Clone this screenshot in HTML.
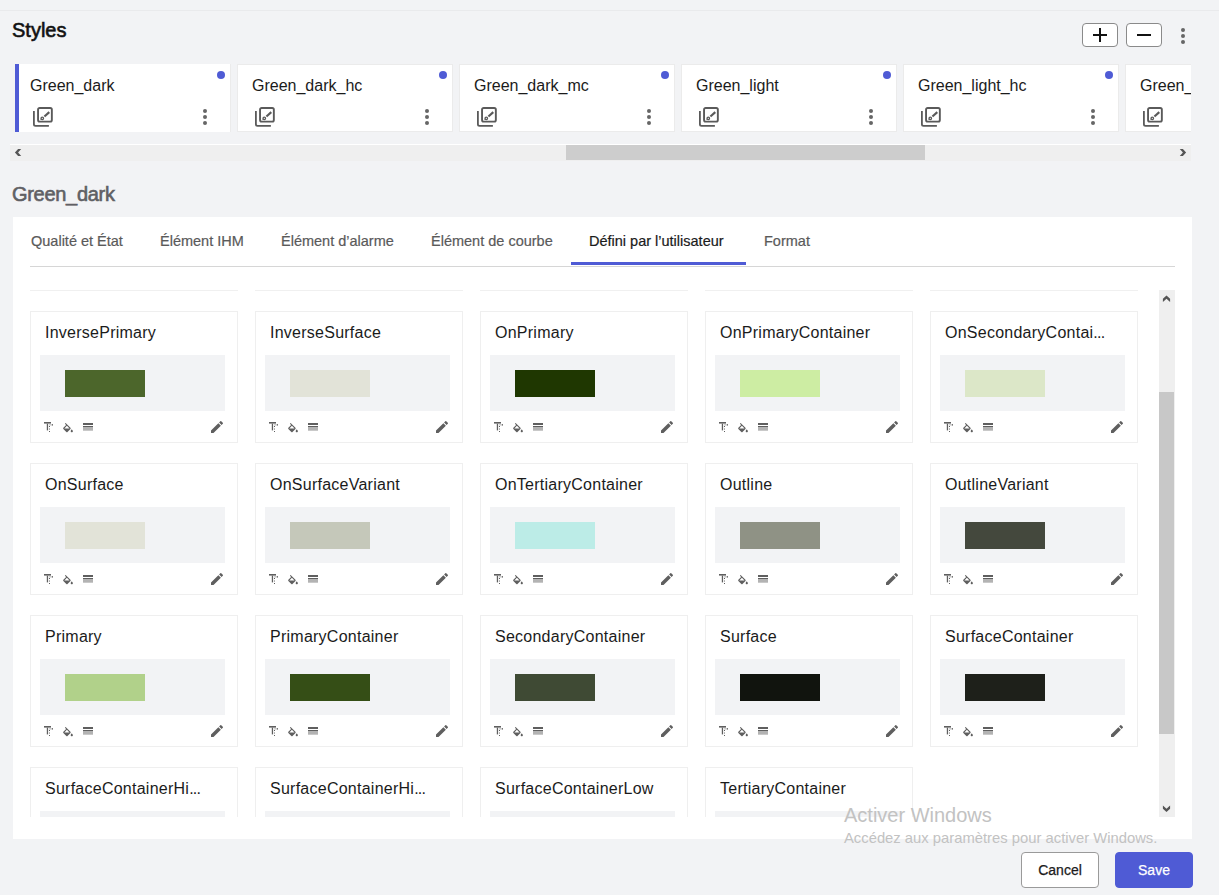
<!DOCTYPE html><html><head><meta charset="utf-8"><style>*{margin:0;padding:0;box-sizing:border-box}
html,body{width:1219px;height:895px;overflow:hidden;background:#f2f3f5;font-family:"Liberation Sans",sans-serif;position:relative}
.topline{position:absolute;left:0;top:10px;width:1219px;height:1px;background:#e9eaec}
.title{position:absolute;left:12px;top:18px;font-size:20px;color:#111;line-height:24px;-webkit-text-stroke:0.6px #111}
.btn{position:absolute;top:23px;width:36px;height:24px;border:1px solid #8a8a8a;border-radius:4px;background:#fff}
.btn svg{position:absolute;left:-1px;top:-1px}
.keb{position:absolute;width:4px;height:16px}
.keb i{display:block;width:4px;height:4px;border-radius:50%;background:#666;margin-bottom:2px}
.topkeb{left:1181px;top:28px}
.carousel{position:absolute;left:15px;top:64px;width:1176px;height:68px;overflow:hidden}
.tc{position:absolute;top:0;width:216px;height:68px;background:#fff;border:1px solid #ebebeb}
.tc.sel{border-left:4px solid #4f5bd5;border-top:0;border-bottom:0}
.tcn{position:absolute;left:14px;top:12px;font-size:16px;color:#1b1b1b;line-height:18px;white-space:nowrap}
.dot{position:absolute;left:201px;top:6px;width:8px;height:8px;border-radius:50%;background:#4f5bd5}
.tc .lib{position:absolute;left:17px;top:42px}
.tc .keb{left:187px;top:44px}
.tc.sel .tcn{left:11px;top:13px}.tc.sel .lib{left:14px;top:43px}.tc.sel .keb{left:184px;top:45px}.tc.sel .dot{left:198px;top:7px}
.hscroll{position:absolute;left:10px;top:144px;width:1181px;height:17px;background:#efefef;border-top:1px solid #fff}
.hthumb{position:absolute;left:556px;top:0;width:359px;height:15px;background:#cdcdcd}
.harr{position:absolute;top:3px}.harr.l{left:3px}.harr.r{left:1168px}
.sub{position:absolute;left:12px;top:182px;font-size:20px;color:#5f6064;line-height:24px;letter-spacing:-0.3px;-webkit-text-stroke:0.6px #5f6064}
.panel{position:absolute;left:13px;top:217px;width:1179px;height:622px;background:#fff}
.tab{position:absolute;top:15px;font-size:14.5px;color:#5a5a5a;line-height:18px;white-space:nowrap;-webkit-text-stroke:0.2px currentColor}
.tab.act{color:#1b1b1b}
.tabline{position:absolute;left:17px;top:49px;width:1145px;height:1px;background:#d6d6d6}
.tabul{position:absolute;left:558px;top:45px;width:175px;height:3px;background:#4f5bd5}
.gridwrap{position:absolute;left:0;top:52px;width:1179px;height:548px;overflow:hidden}
.gtopline{position:absolute;top:21px;height:1px;background:#f0f0f0}
.gc{position:absolute;width:208px;height:132px;border:1px solid #efefef;background:#fff}
.gcn{position:absolute;left:14px;top:11px;font-size:16px;letter-spacing:0.25px;color:#1b1b1b;line-height:20px;white-space:nowrap}
.gbox{position:absolute;left:9px;top:43px;width:185px;height:56px;background:#f2f3f5}
.sw{position:absolute;left:25px;top:15px;width:80px;height:27px}
.ic{position:absolute;left:10px;top:107px}
.pen{position:absolute;left:178px;top:107px}
.vscroll{position:absolute;left:1146px;top:73px;width:16px;height:527px;background:#efefef}
.vthumb{position:absolute;left:0;top:102px;width:15px;height:342px;background:#c8c8c8}
.varr{position:absolute;left:3px}.varr.u{top:4px}.varr.d{top:513px}
.wm1{position:absolute;left:844px;top:803px;font-size:20px;color:#c2c2c2;line-height:24px;white-space:nowrap}
.wm2{position:absolute;left:844px;top:829px;font-size:14.8px;color:#c2c2c2;line-height:18px;white-space:nowrap}
.fbtn{position:absolute;top:852px;height:36px;border-radius:4px;font-size:14px;line-height:34px;text-align:center;-webkit-text-stroke:0.25px currentColor}
.cancel{left:1021px;width:78px;border:1px solid #9a9a9a;background:#fff;color:#1b1b1b}
.save{left:1115px;width:78px;background:#4f5bd5;color:#fff;border:1px solid #4f5bd5}
</style></head><body>
<div class="topline"></div>
<div class="title">Styles</div>
<div class="btn plus" style="left:1082px"><svg width="36" height="24" viewBox="0 0 36 24"><path d="M11 12h14M18 5v14" stroke="#111" stroke-width="2"/></svg></div>
<div class="btn minus" style="left:1126px"><svg width="36" height="24" viewBox="0 0 36 24"><path d="M11 12h14" stroke="#111" stroke-width="2"/></svg></div>
<div class="keb topkeb"><i></i><i></i><i></i></div>
<div class="carousel">
<div class="tc sel" style="left:0px"><div class="tcn">Green_dark</div><div class="dot"></div><svg class="lib" width="20" height="20" viewBox="0 0 20 20"><path d="M0.9 4V17.3a1.6 1.6 0 0 0 1.6 1.6H15.9" fill="none" stroke="#5a5a5a" stroke-width="1.8"/><rect x="5.05" y="1" width="13.8" height="13.65" rx="1.6" fill="none" stroke="#5a5a5a" stroke-width="1.9"/><path d="M11.4 9.5L16.3 5.1" stroke="#5a5a5a" stroke-width="2.1"/><circle cx="9.3" cy="11.3" r="1.25" fill="none" stroke="#5a5a5a" stroke-width="1.3"/><path d="M8.2 12.2L6.9 12.9 7.9 11.6z" fill="#5a5a5a"/></svg><div class="keb"><i></i><i></i><i></i></div></div>
<div class="tc" style="left:222px"><div class="tcn">Green_dark_hc</div><div class="dot"></div><svg class="lib" width="20" height="20" viewBox="0 0 20 20"><path d="M0.9 4V17.3a1.6 1.6 0 0 0 1.6 1.6H15.9" fill="none" stroke="#5a5a5a" stroke-width="1.8"/><rect x="5.05" y="1" width="13.8" height="13.65" rx="1.6" fill="none" stroke="#5a5a5a" stroke-width="1.9"/><path d="M11.4 9.5L16.3 5.1" stroke="#5a5a5a" stroke-width="2.1"/><circle cx="9.3" cy="11.3" r="1.25" fill="none" stroke="#5a5a5a" stroke-width="1.3"/><path d="M8.2 12.2L6.9 12.9 7.9 11.6z" fill="#5a5a5a"/></svg><div class="keb"><i></i><i></i><i></i></div></div>
<div class="tc" style="left:444px"><div class="tcn">Green_dark_mc</div><div class="dot"></div><svg class="lib" width="20" height="20" viewBox="0 0 20 20"><path d="M0.9 4V17.3a1.6 1.6 0 0 0 1.6 1.6H15.9" fill="none" stroke="#5a5a5a" stroke-width="1.8"/><rect x="5.05" y="1" width="13.8" height="13.65" rx="1.6" fill="none" stroke="#5a5a5a" stroke-width="1.9"/><path d="M11.4 9.5L16.3 5.1" stroke="#5a5a5a" stroke-width="2.1"/><circle cx="9.3" cy="11.3" r="1.25" fill="none" stroke="#5a5a5a" stroke-width="1.3"/><path d="M8.2 12.2L6.9 12.9 7.9 11.6z" fill="#5a5a5a"/></svg><div class="keb"><i></i><i></i><i></i></div></div>
<div class="tc" style="left:666px"><div class="tcn">Green_light</div><div class="dot"></div><svg class="lib" width="20" height="20" viewBox="0 0 20 20"><path d="M0.9 4V17.3a1.6 1.6 0 0 0 1.6 1.6H15.9" fill="none" stroke="#5a5a5a" stroke-width="1.8"/><rect x="5.05" y="1" width="13.8" height="13.65" rx="1.6" fill="none" stroke="#5a5a5a" stroke-width="1.9"/><path d="M11.4 9.5L16.3 5.1" stroke="#5a5a5a" stroke-width="2.1"/><circle cx="9.3" cy="11.3" r="1.25" fill="none" stroke="#5a5a5a" stroke-width="1.3"/><path d="M8.2 12.2L6.9 12.9 7.9 11.6z" fill="#5a5a5a"/></svg><div class="keb"><i></i><i></i><i></i></div></div>
<div class="tc" style="left:888px"><div class="tcn">Green_light_hc</div><div class="dot"></div><svg class="lib" width="20" height="20" viewBox="0 0 20 20"><path d="M0.9 4V17.3a1.6 1.6 0 0 0 1.6 1.6H15.9" fill="none" stroke="#5a5a5a" stroke-width="1.8"/><rect x="5.05" y="1" width="13.8" height="13.65" rx="1.6" fill="none" stroke="#5a5a5a" stroke-width="1.9"/><path d="M11.4 9.5L16.3 5.1" stroke="#5a5a5a" stroke-width="2.1"/><circle cx="9.3" cy="11.3" r="1.25" fill="none" stroke="#5a5a5a" stroke-width="1.3"/><path d="M8.2 12.2L6.9 12.9 7.9 11.6z" fill="#5a5a5a"/></svg><div class="keb"><i></i><i></i><i></i></div></div>
<div class="tc" style="left:1110px"><div class="tcn">Green_light_mc</div><div class="dot"></div><svg class="lib" width="20" height="20" viewBox="0 0 20 20"><path d="M0.9 4V17.3a1.6 1.6 0 0 0 1.6 1.6H15.9" fill="none" stroke="#5a5a5a" stroke-width="1.8"/><rect x="5.05" y="1" width="13.8" height="13.65" rx="1.6" fill="none" stroke="#5a5a5a" stroke-width="1.9"/><path d="M11.4 9.5L16.3 5.1" stroke="#5a5a5a" stroke-width="2.1"/><circle cx="9.3" cy="11.3" r="1.25" fill="none" stroke="#5a5a5a" stroke-width="1.3"/><path d="M8.2 12.2L6.9 12.9 7.9 11.6z" fill="#5a5a5a"/></svg><div class="keb"><i></i><i></i><i></i></div></div>
</div>
<div class="hscroll"><div class="hthumb"></div><svg class="harr l" width="10" height="10" viewBox="0 0 10 10"><path d="M5.1 0.9H8.2L5.1 4.5 8.2 8.1H5.1L1.9 4.5z" fill="#555"/></svg><svg class="harr r" width="10" height="10" viewBox="0 0 10 10"><path d="M1.8 0.9H4.9L8.1 4.5 4.9 8.1H1.8L4.9 4.5z" fill="#555"/></svg></div>
<div class="sub">Green_dark</div>
<div class="panel">
<div class="tab" style="left:18px">Qualité et État</div>
<div class="tab" style="left:147px">Élément IHM</div>
<div class="tab" style="left:268px">Élément d’alarme</div>
<div class="tab" style="left:418px">Élément de courbe</div>
<div class="tab act" style="left:576px">Défini par l’utilisateur</div>
<div class="tab" style="left:751px">Format</div>
<div class="tabline"></div><div class="tabul"></div>
<div class="gridwrap">
<div class="gtopline" style="left:17px;width:208px"></div><div class="gtopline" style="left:242px;width:208px"></div><div class="gtopline" style="left:467px;width:208px"></div><div class="gtopline" style="left:692px;width:208px"></div><div class="gtopline" style="left:917px;width:208px"></div>
<div class="gc" style="left:17px;top:42px"><div class="gcn">InversePrimary</div><div class="gbox"><div class="sw" style="background:#4c662b"></div></div><svg class="ic" width="60" height="16" viewBox="0 0 60 16"><rect x="3" y="3" width="7" height="1.6" fill="#5f5f5f"/><rect x="5.8" y="4.6" width="1.3" height="6.8" fill="#5f5f5f"/><rect x="8.1" y="5" width="3.6" height="1.6" fill="#ccc"/><rect x="11" y="5" width="1" height="1.6" fill="#777"/><rect x="8" y="7" width="1" height="1" fill="#5f5f5f"/><rect x="8" y="9.2" width="1" height="1.7" fill="#aaa"/><rect x="8" y="12" width="1" height="1" fill="#5f5f5f"/><svg x="20.5" y="4" width="13" height="13" viewBox="0 0 24 24"><path d="M16.56 8.94L7.62 0 6.21 1.41l2.38 2.38-5.15 5.15c-.59.59-.59 1.54 0 2.12l5.5 5.5c.29.29.68.44 1.06.44s.77-.15 1.06-.44l5.5-5.5c.59-.58.59-1.53 0-2.12zM5.21 10L10 5.21 14.79 10H5.21zM19 11.5s-2 2.17-2 3.5c0 1.1.9 2 2 2s2-.9 2-2c0-1.33-2-3.5-2-3.5z" fill="#5f5f5f"/></svg><rect x="42" y="4" width="10" height="2" fill="#5f5f5f"/><rect x="42" y="7" width="10" height="1" fill="#5f5f5f"/><rect x="42" y="8" width="10" height="3.7" fill="#b3b3b3"/></svg><svg class="pen" width="16" height="16" viewBox="0 0 24 24"><path d="M3 17.25V21h3.75L17.81 9.94l-3.75-3.75L3 17.25zM20.71 7.04a1 1 0 000-1.41l-2.34-2.34a1 1 0 00-1.41 0l-1.83 1.83 3.75 3.75 1.83-1.83z" fill="#5f5f5f"/></svg></div>
<div class="gc" style="left:242px;top:42px"><div class="gcn">InverseSurface</div><div class="gbox"><div class="sw" style="background:#e2e3d8"></div></div><svg class="ic" width="60" height="16" viewBox="0 0 60 16"><rect x="3" y="3" width="7" height="1.6" fill="#5f5f5f"/><rect x="5.8" y="4.6" width="1.3" height="6.8" fill="#5f5f5f"/><rect x="8.1" y="5" width="3.6" height="1.6" fill="#ccc"/><rect x="11" y="5" width="1" height="1.6" fill="#777"/><rect x="8" y="7" width="1" height="1" fill="#5f5f5f"/><rect x="8" y="9.2" width="1" height="1.7" fill="#aaa"/><rect x="8" y="12" width="1" height="1" fill="#5f5f5f"/><svg x="20.5" y="4" width="13" height="13" viewBox="0 0 24 24"><path d="M16.56 8.94L7.62 0 6.21 1.41l2.38 2.38-5.15 5.15c-.59.59-.59 1.54 0 2.12l5.5 5.5c.29.29.68.44 1.06.44s.77-.15 1.06-.44l5.5-5.5c.59-.58.59-1.53 0-2.12zM5.21 10L10 5.21 14.79 10H5.21zM19 11.5s-2 2.17-2 3.5c0 1.1.9 2 2 2s2-.9 2-2c0-1.33-2-3.5-2-3.5z" fill="#5f5f5f"/></svg><rect x="42" y="4" width="10" height="2" fill="#5f5f5f"/><rect x="42" y="7" width="10" height="1" fill="#5f5f5f"/><rect x="42" y="8" width="10" height="3.7" fill="#b3b3b3"/></svg><svg class="pen" width="16" height="16" viewBox="0 0 24 24"><path d="M3 17.25V21h3.75L17.81 9.94l-3.75-3.75L3 17.25zM20.71 7.04a1 1 0 000-1.41l-2.34-2.34a1 1 0 00-1.41 0l-1.83 1.83 3.75 3.75 1.83-1.83z" fill="#5f5f5f"/></svg></div>
<div class="gc" style="left:467px;top:42px"><div class="gcn">OnPrimary</div><div class="gbox"><div class="sw" style="background:#1f3701"></div></div><svg class="ic" width="60" height="16" viewBox="0 0 60 16"><rect x="3" y="3" width="7" height="1.6" fill="#5f5f5f"/><rect x="5.8" y="4.6" width="1.3" height="6.8" fill="#5f5f5f"/><rect x="8.1" y="5" width="3.6" height="1.6" fill="#ccc"/><rect x="11" y="5" width="1" height="1.6" fill="#777"/><rect x="8" y="7" width="1" height="1" fill="#5f5f5f"/><rect x="8" y="9.2" width="1" height="1.7" fill="#aaa"/><rect x="8" y="12" width="1" height="1" fill="#5f5f5f"/><svg x="20.5" y="4" width="13" height="13" viewBox="0 0 24 24"><path d="M16.56 8.94L7.62 0 6.21 1.41l2.38 2.38-5.15 5.15c-.59.59-.59 1.54 0 2.12l5.5 5.5c.29.29.68.44 1.06.44s.77-.15 1.06-.44l5.5-5.5c.59-.58.59-1.53 0-2.12zM5.21 10L10 5.21 14.79 10H5.21zM19 11.5s-2 2.17-2 3.5c0 1.1.9 2 2 2s2-.9 2-2c0-1.33-2-3.5-2-3.5z" fill="#5f5f5f"/></svg><rect x="42" y="4" width="10" height="2" fill="#5f5f5f"/><rect x="42" y="7" width="10" height="1" fill="#5f5f5f"/><rect x="42" y="8" width="10" height="3.7" fill="#b3b3b3"/></svg><svg class="pen" width="16" height="16" viewBox="0 0 24 24"><path d="M3 17.25V21h3.75L17.81 9.94l-3.75-3.75L3 17.25zM20.71 7.04a1 1 0 000-1.41l-2.34-2.34a1 1 0 00-1.41 0l-1.83 1.83 3.75 3.75 1.83-1.83z" fill="#5f5f5f"/></svg></div>
<div class="gc" style="left:692px;top:42px"><div class="gcn">OnPrimaryContainer</div><div class="gbox"><div class="sw" style="background:#cdeda3"></div></div><svg class="ic" width="60" height="16" viewBox="0 0 60 16"><rect x="3" y="3" width="7" height="1.6" fill="#5f5f5f"/><rect x="5.8" y="4.6" width="1.3" height="6.8" fill="#5f5f5f"/><rect x="8.1" y="5" width="3.6" height="1.6" fill="#ccc"/><rect x="11" y="5" width="1" height="1.6" fill="#777"/><rect x="8" y="7" width="1" height="1" fill="#5f5f5f"/><rect x="8" y="9.2" width="1" height="1.7" fill="#aaa"/><rect x="8" y="12" width="1" height="1" fill="#5f5f5f"/><svg x="20.5" y="4" width="13" height="13" viewBox="0 0 24 24"><path d="M16.56 8.94L7.62 0 6.21 1.41l2.38 2.38-5.15 5.15c-.59.59-.59 1.54 0 2.12l5.5 5.5c.29.29.68.44 1.06.44s.77-.15 1.06-.44l5.5-5.5c.59-.58.59-1.53 0-2.12zM5.21 10L10 5.21 14.79 10H5.21zM19 11.5s-2 2.17-2 3.5c0 1.1.9 2 2 2s2-.9 2-2c0-1.33-2-3.5-2-3.5z" fill="#5f5f5f"/></svg><rect x="42" y="4" width="10" height="2" fill="#5f5f5f"/><rect x="42" y="7" width="10" height="1" fill="#5f5f5f"/><rect x="42" y="8" width="10" height="3.7" fill="#b3b3b3"/></svg><svg class="pen" width="16" height="16" viewBox="0 0 24 24"><path d="M3 17.25V21h3.75L17.81 9.94l-3.75-3.75L3 17.25zM20.71 7.04a1 1 0 000-1.41l-2.34-2.34a1 1 0 00-1.41 0l-1.83 1.83 3.75 3.75 1.83-1.83z" fill="#5f5f5f"/></svg></div>
<div class="gc" style="left:917px;top:42px"><div class="gcn">OnSecondaryContai<span style="letter-spacing:-0.7px">...</span></div><div class="gbox"><div class="sw" style="background:#dce7c8"></div></div><svg class="ic" width="60" height="16" viewBox="0 0 60 16"><rect x="3" y="3" width="7" height="1.6" fill="#5f5f5f"/><rect x="5.8" y="4.6" width="1.3" height="6.8" fill="#5f5f5f"/><rect x="8.1" y="5" width="3.6" height="1.6" fill="#ccc"/><rect x="11" y="5" width="1" height="1.6" fill="#777"/><rect x="8" y="7" width="1" height="1" fill="#5f5f5f"/><rect x="8" y="9.2" width="1" height="1.7" fill="#aaa"/><rect x="8" y="12" width="1" height="1" fill="#5f5f5f"/><svg x="20.5" y="4" width="13" height="13" viewBox="0 0 24 24"><path d="M16.56 8.94L7.62 0 6.21 1.41l2.38 2.38-5.15 5.15c-.59.59-.59 1.54 0 2.12l5.5 5.5c.29.29.68.44 1.06.44s.77-.15 1.06-.44l5.5-5.5c.59-.58.59-1.53 0-2.12zM5.21 10L10 5.21 14.79 10H5.21zM19 11.5s-2 2.17-2 3.5c0 1.1.9 2 2 2s2-.9 2-2c0-1.33-2-3.5-2-3.5z" fill="#5f5f5f"/></svg><rect x="42" y="4" width="10" height="2" fill="#5f5f5f"/><rect x="42" y="7" width="10" height="1" fill="#5f5f5f"/><rect x="42" y="8" width="10" height="3.7" fill="#b3b3b3"/></svg><svg class="pen" width="16" height="16" viewBox="0 0 24 24"><path d="M3 17.25V21h3.75L17.81 9.94l-3.75-3.75L3 17.25zM20.71 7.04a1 1 0 000-1.41l-2.34-2.34a1 1 0 00-1.41 0l-1.83 1.83 3.75 3.75 1.83-1.83z" fill="#5f5f5f"/></svg></div>
<div class="gc" style="left:17px;top:194px"><div class="gcn">OnSurface</div><div class="gbox"><div class="sw" style="background:#e2e3d8"></div></div><svg class="ic" width="60" height="16" viewBox="0 0 60 16"><rect x="3" y="3" width="7" height="1.6" fill="#5f5f5f"/><rect x="5.8" y="4.6" width="1.3" height="6.8" fill="#5f5f5f"/><rect x="8.1" y="5" width="3.6" height="1.6" fill="#ccc"/><rect x="11" y="5" width="1" height="1.6" fill="#777"/><rect x="8" y="7" width="1" height="1" fill="#5f5f5f"/><rect x="8" y="9.2" width="1" height="1.7" fill="#aaa"/><rect x="8" y="12" width="1" height="1" fill="#5f5f5f"/><svg x="20.5" y="4" width="13" height="13" viewBox="0 0 24 24"><path d="M16.56 8.94L7.62 0 6.21 1.41l2.38 2.38-5.15 5.15c-.59.59-.59 1.54 0 2.12l5.5 5.5c.29.29.68.44 1.06.44s.77-.15 1.06-.44l5.5-5.5c.59-.58.59-1.53 0-2.12zM5.21 10L10 5.21 14.79 10H5.21zM19 11.5s-2 2.17-2 3.5c0 1.1.9 2 2 2s2-.9 2-2c0-1.33-2-3.5-2-3.5z" fill="#5f5f5f"/></svg><rect x="42" y="4" width="10" height="2" fill="#5f5f5f"/><rect x="42" y="7" width="10" height="1" fill="#5f5f5f"/><rect x="42" y="8" width="10" height="3.7" fill="#b3b3b3"/></svg><svg class="pen" width="16" height="16" viewBox="0 0 24 24"><path d="M3 17.25V21h3.75L17.81 9.94l-3.75-3.75L3 17.25zM20.71 7.04a1 1 0 000-1.41l-2.34-2.34a1 1 0 00-1.41 0l-1.83 1.83 3.75 3.75 1.83-1.83z" fill="#5f5f5f"/></svg></div>
<div class="gc" style="left:242px;top:194px"><div class="gcn">OnSurfaceVariant</div><div class="gbox"><div class="sw" style="background:#c5c8ba"></div></div><svg class="ic" width="60" height="16" viewBox="0 0 60 16"><rect x="3" y="3" width="7" height="1.6" fill="#5f5f5f"/><rect x="5.8" y="4.6" width="1.3" height="6.8" fill="#5f5f5f"/><rect x="8.1" y="5" width="3.6" height="1.6" fill="#ccc"/><rect x="11" y="5" width="1" height="1.6" fill="#777"/><rect x="8" y="7" width="1" height="1" fill="#5f5f5f"/><rect x="8" y="9.2" width="1" height="1.7" fill="#aaa"/><rect x="8" y="12" width="1" height="1" fill="#5f5f5f"/><svg x="20.5" y="4" width="13" height="13" viewBox="0 0 24 24"><path d="M16.56 8.94L7.62 0 6.21 1.41l2.38 2.38-5.15 5.15c-.59.59-.59 1.54 0 2.12l5.5 5.5c.29.29.68.44 1.06.44s.77-.15 1.06-.44l5.5-5.5c.59-.58.59-1.53 0-2.12zM5.21 10L10 5.21 14.79 10H5.21zM19 11.5s-2 2.17-2 3.5c0 1.1.9 2 2 2s2-.9 2-2c0-1.33-2-3.5-2-3.5z" fill="#5f5f5f"/></svg><rect x="42" y="4" width="10" height="2" fill="#5f5f5f"/><rect x="42" y="7" width="10" height="1" fill="#5f5f5f"/><rect x="42" y="8" width="10" height="3.7" fill="#b3b3b3"/></svg><svg class="pen" width="16" height="16" viewBox="0 0 24 24"><path d="M3 17.25V21h3.75L17.81 9.94l-3.75-3.75L3 17.25zM20.71 7.04a1 1 0 000-1.41l-2.34-2.34a1 1 0 00-1.41 0l-1.83 1.83 3.75 3.75 1.83-1.83z" fill="#5f5f5f"/></svg></div>
<div class="gc" style="left:467px;top:194px"><div class="gcn">OnTertiaryContainer</div><div class="gbox"><div class="sw" style="background:#bcece7"></div></div><svg class="ic" width="60" height="16" viewBox="0 0 60 16"><rect x="3" y="3" width="7" height="1.6" fill="#5f5f5f"/><rect x="5.8" y="4.6" width="1.3" height="6.8" fill="#5f5f5f"/><rect x="8.1" y="5" width="3.6" height="1.6" fill="#ccc"/><rect x="11" y="5" width="1" height="1.6" fill="#777"/><rect x="8" y="7" width="1" height="1" fill="#5f5f5f"/><rect x="8" y="9.2" width="1" height="1.7" fill="#aaa"/><rect x="8" y="12" width="1" height="1" fill="#5f5f5f"/><svg x="20.5" y="4" width="13" height="13" viewBox="0 0 24 24"><path d="M16.56 8.94L7.62 0 6.21 1.41l2.38 2.38-5.15 5.15c-.59.59-.59 1.54 0 2.12l5.5 5.5c.29.29.68.44 1.06.44s.77-.15 1.06-.44l5.5-5.5c.59-.58.59-1.53 0-2.12zM5.21 10L10 5.21 14.79 10H5.21zM19 11.5s-2 2.17-2 3.5c0 1.1.9 2 2 2s2-.9 2-2c0-1.33-2-3.5-2-3.5z" fill="#5f5f5f"/></svg><rect x="42" y="4" width="10" height="2" fill="#5f5f5f"/><rect x="42" y="7" width="10" height="1" fill="#5f5f5f"/><rect x="42" y="8" width="10" height="3.7" fill="#b3b3b3"/></svg><svg class="pen" width="16" height="16" viewBox="0 0 24 24"><path d="M3 17.25V21h3.75L17.81 9.94l-3.75-3.75L3 17.25zM20.71 7.04a1 1 0 000-1.41l-2.34-2.34a1 1 0 00-1.41 0l-1.83 1.83 3.75 3.75 1.83-1.83z" fill="#5f5f5f"/></svg></div>
<div class="gc" style="left:692px;top:194px"><div class="gcn">Outline</div><div class="gbox"><div class="sw" style="background:#8f9285"></div></div><svg class="ic" width="60" height="16" viewBox="0 0 60 16"><rect x="3" y="3" width="7" height="1.6" fill="#5f5f5f"/><rect x="5.8" y="4.6" width="1.3" height="6.8" fill="#5f5f5f"/><rect x="8.1" y="5" width="3.6" height="1.6" fill="#ccc"/><rect x="11" y="5" width="1" height="1.6" fill="#777"/><rect x="8" y="7" width="1" height="1" fill="#5f5f5f"/><rect x="8" y="9.2" width="1" height="1.7" fill="#aaa"/><rect x="8" y="12" width="1" height="1" fill="#5f5f5f"/><svg x="20.5" y="4" width="13" height="13" viewBox="0 0 24 24"><path d="M16.56 8.94L7.62 0 6.21 1.41l2.38 2.38-5.15 5.15c-.59.59-.59 1.54 0 2.12l5.5 5.5c.29.29.68.44 1.06.44s.77-.15 1.06-.44l5.5-5.5c.59-.58.59-1.53 0-2.12zM5.21 10L10 5.21 14.79 10H5.21zM19 11.5s-2 2.17-2 3.5c0 1.1.9 2 2 2s2-.9 2-2c0-1.33-2-3.5-2-3.5z" fill="#5f5f5f"/></svg><rect x="42" y="4" width="10" height="2" fill="#5f5f5f"/><rect x="42" y="7" width="10" height="1" fill="#5f5f5f"/><rect x="42" y="8" width="10" height="3.7" fill="#b3b3b3"/></svg><svg class="pen" width="16" height="16" viewBox="0 0 24 24"><path d="M3 17.25V21h3.75L17.81 9.94l-3.75-3.75L3 17.25zM20.71 7.04a1 1 0 000-1.41l-2.34-2.34a1 1 0 00-1.41 0l-1.83 1.83 3.75 3.75 1.83-1.83z" fill="#5f5f5f"/></svg></div>
<div class="gc" style="left:917px;top:194px"><div class="gcn">OutlineVariant</div><div class="gbox"><div class="sw" style="background:#44483d"></div></div><svg class="ic" width="60" height="16" viewBox="0 0 60 16"><rect x="3" y="3" width="7" height="1.6" fill="#5f5f5f"/><rect x="5.8" y="4.6" width="1.3" height="6.8" fill="#5f5f5f"/><rect x="8.1" y="5" width="3.6" height="1.6" fill="#ccc"/><rect x="11" y="5" width="1" height="1.6" fill="#777"/><rect x="8" y="7" width="1" height="1" fill="#5f5f5f"/><rect x="8" y="9.2" width="1" height="1.7" fill="#aaa"/><rect x="8" y="12" width="1" height="1" fill="#5f5f5f"/><svg x="20.5" y="4" width="13" height="13" viewBox="0 0 24 24"><path d="M16.56 8.94L7.62 0 6.21 1.41l2.38 2.38-5.15 5.15c-.59.59-.59 1.54 0 2.12l5.5 5.5c.29.29.68.44 1.06.44s.77-.15 1.06-.44l5.5-5.5c.59-.58.59-1.53 0-2.12zM5.21 10L10 5.21 14.79 10H5.21zM19 11.5s-2 2.17-2 3.5c0 1.1.9 2 2 2s2-.9 2-2c0-1.33-2-3.5-2-3.5z" fill="#5f5f5f"/></svg><rect x="42" y="4" width="10" height="2" fill="#5f5f5f"/><rect x="42" y="7" width="10" height="1" fill="#5f5f5f"/><rect x="42" y="8" width="10" height="3.7" fill="#b3b3b3"/></svg><svg class="pen" width="16" height="16" viewBox="0 0 24 24"><path d="M3 17.25V21h3.75L17.81 9.94l-3.75-3.75L3 17.25zM20.71 7.04a1 1 0 000-1.41l-2.34-2.34a1 1 0 00-1.41 0l-1.83 1.83 3.75 3.75 1.83-1.83z" fill="#5f5f5f"/></svg></div>
<div class="gc" style="left:17px;top:346px"><div class="gcn">Primary</div><div class="gbox"><div class="sw" style="background:#b1d18a"></div></div><svg class="ic" width="60" height="16" viewBox="0 0 60 16"><rect x="3" y="3" width="7" height="1.6" fill="#5f5f5f"/><rect x="5.8" y="4.6" width="1.3" height="6.8" fill="#5f5f5f"/><rect x="8.1" y="5" width="3.6" height="1.6" fill="#ccc"/><rect x="11" y="5" width="1" height="1.6" fill="#777"/><rect x="8" y="7" width="1" height="1" fill="#5f5f5f"/><rect x="8" y="9.2" width="1" height="1.7" fill="#aaa"/><rect x="8" y="12" width="1" height="1" fill="#5f5f5f"/><svg x="20.5" y="4" width="13" height="13" viewBox="0 0 24 24"><path d="M16.56 8.94L7.62 0 6.21 1.41l2.38 2.38-5.15 5.15c-.59.59-.59 1.54 0 2.12l5.5 5.5c.29.29.68.44 1.06.44s.77-.15 1.06-.44l5.5-5.5c.59-.58.59-1.53 0-2.12zM5.21 10L10 5.21 14.79 10H5.21zM19 11.5s-2 2.17-2 3.5c0 1.1.9 2 2 2s2-.9 2-2c0-1.33-2-3.5-2-3.5z" fill="#5f5f5f"/></svg><rect x="42" y="4" width="10" height="2" fill="#5f5f5f"/><rect x="42" y="7" width="10" height="1" fill="#5f5f5f"/><rect x="42" y="8" width="10" height="3.7" fill="#b3b3b3"/></svg><svg class="pen" width="16" height="16" viewBox="0 0 24 24"><path d="M3 17.25V21h3.75L17.81 9.94l-3.75-3.75L3 17.25zM20.71 7.04a1 1 0 000-1.41l-2.34-2.34a1 1 0 00-1.41 0l-1.83 1.83 3.75 3.75 1.83-1.83z" fill="#5f5f5f"/></svg></div>
<div class="gc" style="left:242px;top:346px"><div class="gcn">PrimaryContainer</div><div class="gbox"><div class="sw" style="background:#354e16"></div></div><svg class="ic" width="60" height="16" viewBox="0 0 60 16"><rect x="3" y="3" width="7" height="1.6" fill="#5f5f5f"/><rect x="5.8" y="4.6" width="1.3" height="6.8" fill="#5f5f5f"/><rect x="8.1" y="5" width="3.6" height="1.6" fill="#ccc"/><rect x="11" y="5" width="1" height="1.6" fill="#777"/><rect x="8" y="7" width="1" height="1" fill="#5f5f5f"/><rect x="8" y="9.2" width="1" height="1.7" fill="#aaa"/><rect x="8" y="12" width="1" height="1" fill="#5f5f5f"/><svg x="20.5" y="4" width="13" height="13" viewBox="0 0 24 24"><path d="M16.56 8.94L7.62 0 6.21 1.41l2.38 2.38-5.15 5.15c-.59.59-.59 1.54 0 2.12l5.5 5.5c.29.29.68.44 1.06.44s.77-.15 1.06-.44l5.5-5.5c.59-.58.59-1.53 0-2.12zM5.21 10L10 5.21 14.79 10H5.21zM19 11.5s-2 2.17-2 3.5c0 1.1.9 2 2 2s2-.9 2-2c0-1.33-2-3.5-2-3.5z" fill="#5f5f5f"/></svg><rect x="42" y="4" width="10" height="2" fill="#5f5f5f"/><rect x="42" y="7" width="10" height="1" fill="#5f5f5f"/><rect x="42" y="8" width="10" height="3.7" fill="#b3b3b3"/></svg><svg class="pen" width="16" height="16" viewBox="0 0 24 24"><path d="M3 17.25V21h3.75L17.81 9.94l-3.75-3.75L3 17.25zM20.71 7.04a1 1 0 000-1.41l-2.34-2.34a1 1 0 00-1.41 0l-1.83 1.83 3.75 3.75 1.83-1.83z" fill="#5f5f5f"/></svg></div>
<div class="gc" style="left:467px;top:346px"><div class="gcn">SecondaryContainer</div><div class="gbox"><div class="sw" style="background:#3f4a34"></div></div><svg class="ic" width="60" height="16" viewBox="0 0 60 16"><rect x="3" y="3" width="7" height="1.6" fill="#5f5f5f"/><rect x="5.8" y="4.6" width="1.3" height="6.8" fill="#5f5f5f"/><rect x="8.1" y="5" width="3.6" height="1.6" fill="#ccc"/><rect x="11" y="5" width="1" height="1.6" fill="#777"/><rect x="8" y="7" width="1" height="1" fill="#5f5f5f"/><rect x="8" y="9.2" width="1" height="1.7" fill="#aaa"/><rect x="8" y="12" width="1" height="1" fill="#5f5f5f"/><svg x="20.5" y="4" width="13" height="13" viewBox="0 0 24 24"><path d="M16.56 8.94L7.62 0 6.21 1.41l2.38 2.38-5.15 5.15c-.59.59-.59 1.54 0 2.12l5.5 5.5c.29.29.68.44 1.06.44s.77-.15 1.06-.44l5.5-5.5c.59-.58.59-1.53 0-2.12zM5.21 10L10 5.21 14.79 10H5.21zM19 11.5s-2 2.17-2 3.5c0 1.1.9 2 2 2s2-.9 2-2c0-1.33-2-3.5-2-3.5z" fill="#5f5f5f"/></svg><rect x="42" y="4" width="10" height="2" fill="#5f5f5f"/><rect x="42" y="7" width="10" height="1" fill="#5f5f5f"/><rect x="42" y="8" width="10" height="3.7" fill="#b3b3b3"/></svg><svg class="pen" width="16" height="16" viewBox="0 0 24 24"><path d="M3 17.25V21h3.75L17.81 9.94l-3.75-3.75L3 17.25zM20.71 7.04a1 1 0 000-1.41l-2.34-2.34a1 1 0 00-1.41 0l-1.83 1.83 3.75 3.75 1.83-1.83z" fill="#5f5f5f"/></svg></div>
<div class="gc" style="left:692px;top:346px"><div class="gcn">Surface</div><div class="gbox"><div class="sw" style="background:#11140e"></div></div><svg class="ic" width="60" height="16" viewBox="0 0 60 16"><rect x="3" y="3" width="7" height="1.6" fill="#5f5f5f"/><rect x="5.8" y="4.6" width="1.3" height="6.8" fill="#5f5f5f"/><rect x="8.1" y="5" width="3.6" height="1.6" fill="#ccc"/><rect x="11" y="5" width="1" height="1.6" fill="#777"/><rect x="8" y="7" width="1" height="1" fill="#5f5f5f"/><rect x="8" y="9.2" width="1" height="1.7" fill="#aaa"/><rect x="8" y="12" width="1" height="1" fill="#5f5f5f"/><svg x="20.5" y="4" width="13" height="13" viewBox="0 0 24 24"><path d="M16.56 8.94L7.62 0 6.21 1.41l2.38 2.38-5.15 5.15c-.59.59-.59 1.54 0 2.12l5.5 5.5c.29.29.68.44 1.06.44s.77-.15 1.06-.44l5.5-5.5c.59-.58.59-1.53 0-2.12zM5.21 10L10 5.21 14.79 10H5.21zM19 11.5s-2 2.17-2 3.5c0 1.1.9 2 2 2s2-.9 2-2c0-1.33-2-3.5-2-3.5z" fill="#5f5f5f"/></svg><rect x="42" y="4" width="10" height="2" fill="#5f5f5f"/><rect x="42" y="7" width="10" height="1" fill="#5f5f5f"/><rect x="42" y="8" width="10" height="3.7" fill="#b3b3b3"/></svg><svg class="pen" width="16" height="16" viewBox="0 0 24 24"><path d="M3 17.25V21h3.75L17.81 9.94l-3.75-3.75L3 17.25zM20.71 7.04a1 1 0 000-1.41l-2.34-2.34a1 1 0 00-1.41 0l-1.83 1.83 3.75 3.75 1.83-1.83z" fill="#5f5f5f"/></svg></div>
<div class="gc" style="left:917px;top:346px"><div class="gcn">SurfaceContainer</div><div class="gbox"><div class="sw" style="background:#1e201a"></div></div><svg class="ic" width="60" height="16" viewBox="0 0 60 16"><rect x="3" y="3" width="7" height="1.6" fill="#5f5f5f"/><rect x="5.8" y="4.6" width="1.3" height="6.8" fill="#5f5f5f"/><rect x="8.1" y="5" width="3.6" height="1.6" fill="#ccc"/><rect x="11" y="5" width="1" height="1.6" fill="#777"/><rect x="8" y="7" width="1" height="1" fill="#5f5f5f"/><rect x="8" y="9.2" width="1" height="1.7" fill="#aaa"/><rect x="8" y="12" width="1" height="1" fill="#5f5f5f"/><svg x="20.5" y="4" width="13" height="13" viewBox="0 0 24 24"><path d="M16.56 8.94L7.62 0 6.21 1.41l2.38 2.38-5.15 5.15c-.59.59-.59 1.54 0 2.12l5.5 5.5c.29.29.68.44 1.06.44s.77-.15 1.06-.44l5.5-5.5c.59-.58.59-1.53 0-2.12zM5.21 10L10 5.21 14.79 10H5.21zM19 11.5s-2 2.17-2 3.5c0 1.1.9 2 2 2s2-.9 2-2c0-1.33-2-3.5-2-3.5z" fill="#5f5f5f"/></svg><rect x="42" y="4" width="10" height="2" fill="#5f5f5f"/><rect x="42" y="7" width="10" height="1" fill="#5f5f5f"/><rect x="42" y="8" width="10" height="3.7" fill="#b3b3b3"/></svg><svg class="pen" width="16" height="16" viewBox="0 0 24 24"><path d="M3 17.25V21h3.75L17.81 9.94l-3.75-3.75L3 17.25zM20.71 7.04a1 1 0 000-1.41l-2.34-2.34a1 1 0 00-1.41 0l-1.83 1.83 3.75 3.75 1.83-1.83z" fill="#5f5f5f"/></svg></div>
<div class="gc" style="left:17px;top:498px"><div class="gcn">SurfaceContainerHi<span style="letter-spacing:-0.7px">...</span></div><div class="gbox"></div><svg class="ic" width="60" height="16" viewBox="0 0 60 16"><rect x="3" y="3" width="7" height="1.6" fill="#5f5f5f"/><rect x="5.8" y="4.6" width="1.3" height="6.8" fill="#5f5f5f"/><rect x="8.1" y="5" width="3.6" height="1.6" fill="#ccc"/><rect x="11" y="5" width="1" height="1.6" fill="#777"/><rect x="8" y="7" width="1" height="1" fill="#5f5f5f"/><rect x="8" y="9.2" width="1" height="1.7" fill="#aaa"/><rect x="8" y="12" width="1" height="1" fill="#5f5f5f"/><svg x="20.5" y="4" width="13" height="13" viewBox="0 0 24 24"><path d="M16.56 8.94L7.62 0 6.21 1.41l2.38 2.38-5.15 5.15c-.59.59-.59 1.54 0 2.12l5.5 5.5c.29.29.68.44 1.06.44s.77-.15 1.06-.44l5.5-5.5c.59-.58.59-1.53 0-2.12zM5.21 10L10 5.21 14.79 10H5.21zM19 11.5s-2 2.17-2 3.5c0 1.1.9 2 2 2s2-.9 2-2c0-1.33-2-3.5-2-3.5z" fill="#5f5f5f"/></svg><rect x="42" y="4" width="10" height="2" fill="#5f5f5f"/><rect x="42" y="7" width="10" height="1" fill="#5f5f5f"/><rect x="42" y="8" width="10" height="3.7" fill="#b3b3b3"/></svg><svg class="pen" width="16" height="16" viewBox="0 0 24 24"><path d="M3 17.25V21h3.75L17.81 9.94l-3.75-3.75L3 17.25zM20.71 7.04a1 1 0 000-1.41l-2.34-2.34a1 1 0 00-1.41 0l-1.83 1.83 3.75 3.75 1.83-1.83z" fill="#5f5f5f"/></svg></div>
<div class="gc" style="left:242px;top:498px"><div class="gcn">SurfaceContainerHi<span style="letter-spacing:-0.7px">...</span></div><div class="gbox"></div><svg class="ic" width="60" height="16" viewBox="0 0 60 16"><rect x="3" y="3" width="7" height="1.6" fill="#5f5f5f"/><rect x="5.8" y="4.6" width="1.3" height="6.8" fill="#5f5f5f"/><rect x="8.1" y="5" width="3.6" height="1.6" fill="#ccc"/><rect x="11" y="5" width="1" height="1.6" fill="#777"/><rect x="8" y="7" width="1" height="1" fill="#5f5f5f"/><rect x="8" y="9.2" width="1" height="1.7" fill="#aaa"/><rect x="8" y="12" width="1" height="1" fill="#5f5f5f"/><svg x="20.5" y="4" width="13" height="13" viewBox="0 0 24 24"><path d="M16.56 8.94L7.62 0 6.21 1.41l2.38 2.38-5.15 5.15c-.59.59-.59 1.54 0 2.12l5.5 5.5c.29.29.68.44 1.06.44s.77-.15 1.06-.44l5.5-5.5c.59-.58.59-1.53 0-2.12zM5.21 10L10 5.21 14.79 10H5.21zM19 11.5s-2 2.17-2 3.5c0 1.1.9 2 2 2s2-.9 2-2c0-1.33-2-3.5-2-3.5z" fill="#5f5f5f"/></svg><rect x="42" y="4" width="10" height="2" fill="#5f5f5f"/><rect x="42" y="7" width="10" height="1" fill="#5f5f5f"/><rect x="42" y="8" width="10" height="3.7" fill="#b3b3b3"/></svg><svg class="pen" width="16" height="16" viewBox="0 0 24 24"><path d="M3 17.25V21h3.75L17.81 9.94l-3.75-3.75L3 17.25zM20.71 7.04a1 1 0 000-1.41l-2.34-2.34a1 1 0 00-1.41 0l-1.83 1.83 3.75 3.75 1.83-1.83z" fill="#5f5f5f"/></svg></div>
<div class="gc" style="left:467px;top:498px"><div class="gcn">SurfaceContainerLow</div><div class="gbox"></div><svg class="ic" width="60" height="16" viewBox="0 0 60 16"><rect x="3" y="3" width="7" height="1.6" fill="#5f5f5f"/><rect x="5.8" y="4.6" width="1.3" height="6.8" fill="#5f5f5f"/><rect x="8.1" y="5" width="3.6" height="1.6" fill="#ccc"/><rect x="11" y="5" width="1" height="1.6" fill="#777"/><rect x="8" y="7" width="1" height="1" fill="#5f5f5f"/><rect x="8" y="9.2" width="1" height="1.7" fill="#aaa"/><rect x="8" y="12" width="1" height="1" fill="#5f5f5f"/><svg x="20.5" y="4" width="13" height="13" viewBox="0 0 24 24"><path d="M16.56 8.94L7.62 0 6.21 1.41l2.38 2.38-5.15 5.15c-.59.59-.59 1.54 0 2.12l5.5 5.5c.29.29.68.44 1.06.44s.77-.15 1.06-.44l5.5-5.5c.59-.58.59-1.53 0-2.12zM5.21 10L10 5.21 14.79 10H5.21zM19 11.5s-2 2.17-2 3.5c0 1.1.9 2 2 2s2-.9 2-2c0-1.33-2-3.5-2-3.5z" fill="#5f5f5f"/></svg><rect x="42" y="4" width="10" height="2" fill="#5f5f5f"/><rect x="42" y="7" width="10" height="1" fill="#5f5f5f"/><rect x="42" y="8" width="10" height="3.7" fill="#b3b3b3"/></svg><svg class="pen" width="16" height="16" viewBox="0 0 24 24"><path d="M3 17.25V21h3.75L17.81 9.94l-3.75-3.75L3 17.25zM20.71 7.04a1 1 0 000-1.41l-2.34-2.34a1 1 0 00-1.41 0l-1.83 1.83 3.75 3.75 1.83-1.83z" fill="#5f5f5f"/></svg></div>
<div class="gc" style="left:692px;top:498px"><div class="gcn">TertiaryContainer</div><div class="gbox"></div><svg class="ic" width="60" height="16" viewBox="0 0 60 16"><rect x="3" y="3" width="7" height="1.6" fill="#5f5f5f"/><rect x="5.8" y="4.6" width="1.3" height="6.8" fill="#5f5f5f"/><rect x="8.1" y="5" width="3.6" height="1.6" fill="#ccc"/><rect x="11" y="5" width="1" height="1.6" fill="#777"/><rect x="8" y="7" width="1" height="1" fill="#5f5f5f"/><rect x="8" y="9.2" width="1" height="1.7" fill="#aaa"/><rect x="8" y="12" width="1" height="1" fill="#5f5f5f"/><svg x="20.5" y="4" width="13" height="13" viewBox="0 0 24 24"><path d="M16.56 8.94L7.62 0 6.21 1.41l2.38 2.38-5.15 5.15c-.59.59-.59 1.54 0 2.12l5.5 5.5c.29.29.68.44 1.06.44s.77-.15 1.06-.44l5.5-5.5c.59-.58.59-1.53 0-2.12zM5.21 10L10 5.21 14.79 10H5.21zM19 11.5s-2 2.17-2 3.5c0 1.1.9 2 2 2s2-.9 2-2c0-1.33-2-3.5-2-3.5z" fill="#5f5f5f"/></svg><rect x="42" y="4" width="10" height="2" fill="#5f5f5f"/><rect x="42" y="7" width="10" height="1" fill="#5f5f5f"/><rect x="42" y="8" width="10" height="3.7" fill="#b3b3b3"/></svg><svg class="pen" width="16" height="16" viewBox="0 0 24 24"><path d="M3 17.25V21h3.75L17.81 9.94l-3.75-3.75L3 17.25zM20.71 7.04a1 1 0 000-1.41l-2.34-2.34a1 1 0 00-1.41 0l-1.83 1.83 3.75 3.75 1.83-1.83z" fill="#5f5f5f"/></svg></div>
</div>
<div class="vscroll"><div class="vthumb"></div><svg class="varr u" width="10" height="10" viewBox="0 0 10 10"><path d="M4.5 1.6L8.1 4.8V7.9L4.5 4.8 0.9 7.9V4.8z" fill="#555"/></svg><svg class="varr d" width="10" height="10" viewBox="0 0 10 10"><path d="M0.9 2.6L4.5 5.8 8.1 2.6V5.7L4.5 8.9 0.9 5.7z" fill="#555"/></svg></div>
</div>
<div class="wm1">Activer Windows</div><div class="wm2">Accédez aux paramètres pour activer Windows.</div>
<div class="fbtn cancel">Cancel</div><div class="fbtn save">Save</div>
</body></html>
